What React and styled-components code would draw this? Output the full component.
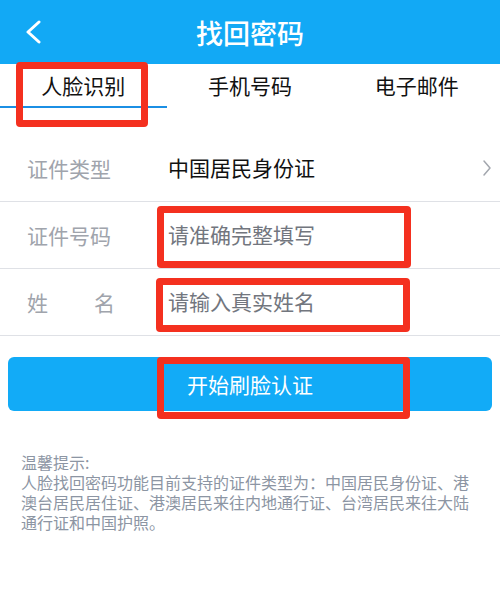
import React from "react";
import styled, { createGlobalStyle } from "styled-components";

const GlobalStyle = createGlobalStyle`
  body {
    margin: 0;
    background: #ffffff;
    font-family: "Noto Sans CJK SC", "Noto Sans", sans-serif;
  }
`;

const Page = styled.div`
  width: 500px;
  min-height: 597px;
  background: #fff;
`;

const Header = styled.div`
  height: 64px;
  background: #12a9f5;
  display: grid;
  grid-template-columns: 80px 1fr 80px;
  align-items: center;
`;

const Back = styled.button`
  border: 0;
  background: none;
  padding: 0 0 0 25px;
  display: flex;
  align-items: center;
  height: 100%;
`;

const Title = styled.h1`
  margin: 0;
  text-align: center;
  color: #fff;
  font-size: 27px;
  font-weight: 500;
  line-height: 1;
`;

const Tabs = styled.div`
  display: grid;
  grid-template-columns: repeat(3, 1fr);
  height: 44px;
`;

const Tab = styled.div`
  position: relative;
  display: flex;
  align-items: center;
  justify-content: center;
  font-size: 21px;
  color: #111;
  border-bottom: 2px solid ${p => (p.$active ? "#1b8fe4" : "transparent")};
`;

const Form = styled.div`
  margin-top: 27px;
`;

const Row = styled.div`
  height: 66px;
  display: flex;
  align-items: center;
  padding: 0 8px 0 27px;
  border-bottom: ${p => (p.$line ? "1px solid #dfe1e6" : "none")};
`;

const Label = styled.div`
  width: 141px;
  flex-shrink: 0;
  font-size: 21px;
  line-height: 30px;
  color: #a0a4ac;
`;

const Spread = styled.div`
  width: 88px;
  display: flex;
  justify-content: space-between;
`;

const Value = styled.div`
  position: relative;
  flex: 1;
  font-size: 21px;
  line-height: 30px;
  margin-top: -3px;
  color: ${p => (p.$placeholder ? "#72767e" : "#111")};
`;

const Button = styled.button`
  position: relative;
  display: block;
  width: 484px;
  height: 54px;
  margin: 21px 8px 0;
  border: 0;
  border-radius: 6px;
  background: #12abf7;
  color: #fff;
  font-family: inherit;
  font-size: 21px;
`;

const Tips = styled.div`
  margin-top: 41px;
  padding: 0 21px;
  width: 456px;
  font-size: 16px;
  line-height: 20px;
  color: #8c95a3;
`;

const Mark = styled.div`
  position: absolute;
  left: ${p => p.$left}px;
  top: ${p => p.$top}px;
  width: ${p => p.$w}px;
  height: ${p => p.$h}px;
  border: 7px solid #f4301f;
  border-radius: 4px;
  box-sizing: border-box;
  pointer-events: none;
`;

const Chevron = ({ color, width, height, sw, points }) => (
  <svg width={width} height={height} viewBox={`0 0 ${width} ${height}`}>
    <polyline points={points} fill="none" stroke={color} strokeWidth={sw} strokeLinecap="round" strokeLinejoin="round" />
  </svg>
);

export default function App() {
  return (
    <Page>
      <GlobalStyle />
      <Header>
        <Back>
          <Chevron color="#fff" width={18} height={24} sw={3} points="14,2 3,12 14,22" />
        </Back>
        <Title>找回密码</Title>
        <div />
      </Header>
      <Tabs>
        <Tab $active>
          人脸识别
          <Mark $left={16} $top={-2} $w={132} $h={65} />
        </Tab>
        <Tab>手机号码</Tab>
        <Tab>电子邮件</Tab>
      </Tabs>
      <Form>
        <Row $line>
          <Label>证件类型</Label>
          <Value>中国居民身份证</Value>
          <Chevron color="#a3a7ae" width={10} height={18} sw={1.5} points="2,2 8,9 2,16" />
        </Row>
        <Row $line>
          <Label>证件号码</Label>
          <Value $placeholder>
            请准确完整填写
            <Mark $left={-11} $top={-13} $w={254} $h={62} />
          </Value>
        </Row>
        <Row $line>
          <Label>
            <Spread>
              <span>姓</span>
              <span>名</span>
            </Spread>
          </Label>
          <Value $placeholder>
            请输入真实姓名
            <Mark $left={-12} $top={-8} $w={254} $h={54} />
          </Value>
        </Row>
      </Form>
      <Button>
        开始刷脸认证
        <Mark $left={149} $top={0} $w={253} $h={62} />
      </Button>
      <Tips>
        温馨提示:
        <br />
        人脸找回密码功能目前支持的证件类型为：中国居民身份证、港澳台居民居住证、港澳居民来往内地通行证、台湾居民来往大陆通行证和中国护照。
      </Tips>
    </Page>
  );
}
